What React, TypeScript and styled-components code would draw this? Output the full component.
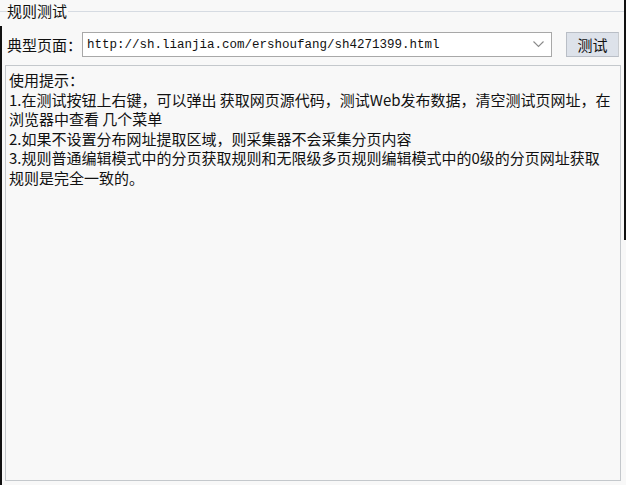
import React from "react";
import styled, { createGlobalStyle } from "styled-components";

const Global = createGlobalStyle`
  html, body { margin: 0; padding: 0; background: #f8f8f8; }
  body { font-family: "Noto Sans CJK SC", "Noto Sans", sans-serif; color: #111; }
`;

const Frame = styled.div`
  position: relative;
  width: 626px;
  height: 485px;
  box-sizing: border-box;
  background: #f8f8f8;
  display: flex;
  flex-direction: column;
  font-size: 15px;
  overflow: hidden;
  &::before {
    content: "";
    position: absolute;
    left: 0;
    top: 26px;
    bottom: 0;
    width: 2px;
    background: #111;
  }
  &::after {
    content: "";
    position: absolute;
    right: 0;
    top: 0;
    height: 240px;
    width: 2px;
    background: #111;
  }
`;

const GroupHeader = styled.div`
  display: flex;
  align-items: center;
  height: 22px;
  padding-right: 2px;
`;

const HeaderLine = styled.div<{ $grow?: boolean }>`
  height: 1px;
  background: #d6dbe2;
  width: 7px;
  flex: ${(p) => (p.$grow ? "1" : "none")};
  margin-top: 1px;
`;

const GroupTitle = styled.span`
  font-size: 15px;
  line-height: 20px;
  padding: 0 1px 0 0;
  color: #111;
`;

const FormRow = styled.div`
  display: flex;
  align-items: center;
  height: 25px;
  margin-top: 10px;
  padding-left: 7px;
`;

const Label = styled.span`
  width: 75px;
  font-size: 15px;
  line-height: 20px;
  white-space: nowrap;
`;

const Combo = styled.div`
  width: 470px;
  height: 25px;
  box-sizing: border-box;
  border: 1px solid #a8a8a8;
  background: #fff;
  display: flex;
  align-items: center;
  padding: 0 6px 0 4px;
`;

const ComboText = styled.span`
  flex: 1;
  font-family: "Liberation Mono", "DejaVu Sans Mono", monospace;
  font-size: 12.5px;
  color: #111;
  white-space: nowrap;
  overflow: hidden;
`;

const Chevron = styled.svg`
  width: 11px;
  height: 7px;
  margin-right: 1px;
`;

const Button = styled.button`
  margin-left: 14px;
  width: 53px;
  height: 25px;
  box-sizing: border-box;
  border: 1px solid #b9bec6;
  border-right-color: #c9ccd0;
  background: #dde2ea;
  font-family: "Noto Sans CJK SC", sans-serif;
  font-size: 15px;
  line-height: 20px;
  color: #111;
  padding: 0;
`;

const Memo = styled.div`
  margin: 8px 0 0 5px;
  width: 616px;
  height: 416px;
  box-sizing: border-box;
  border: 1px solid #c4c8cc;
  background: #f8f8f8;
  padding: 4px 3px;
`;

const MemoLine = styled.div`
  font-size: 15px;
  line-height: 19.5px;
  white-space: nowrap;
  color: #111;
`;

const lines = [
  "使用提示：",
  "1.在测试按钮上右键，可以弹出 获取网页源代码，测试Web发布数据，清空测试页网址，在",
  "浏览器中查看 几个菜单",
  "2.如果不设置分布网址提取区域，则采集器不会采集分页内容",
  "3.规则普通编辑模式中的分页获取规则和无限级多页规则编辑模式中的0级的分页网址获取",
  "规则是完全一致的。",
];

export default function App() {
  return (
    <>
      <Global />
      <Frame>
        <GroupHeader>
          <HeaderLine />
          <GroupTitle>规则测试</GroupTitle>
          <HeaderLine $grow />
        </GroupHeader>
        <FormRow>
          <Label>典型页面：</Label>
          <Combo>
            <ComboText>http://sh.lianjia.com/ershoufang/sh4271399.html</ComboText>
            <Chevron viewBox="0 0 11 7">
              <polyline points="0.5,0.5 5.5,5.5 10.5,0.5" fill="none" stroke="#8a8a8a" strokeWidth="1.1" />
            </Chevron>
          </Combo>
          <Button>测试</Button>
        </FormRow>
        <Memo>
          {lines.map((l, i) => (
            <MemoLine key={i}>{l}</MemoLine>
          ))}
        </Memo>
      </Frame>
    </>
  );
}
